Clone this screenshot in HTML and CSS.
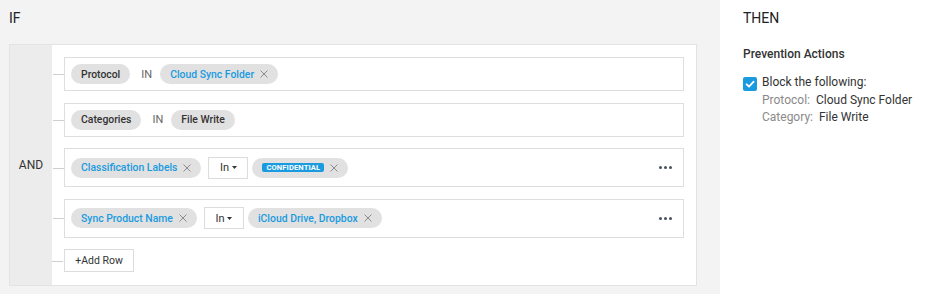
FILE: index.html
```html
<!DOCTYPE html>
<html lang="en">
<head>
<meta charset="utf-8">
<title>Policy rule</title>
<link rel="stylesheet" href="styles.css">
</head>
<body>
<div class="page">
  <section class="if-pane">
    <h2 class="pane-title">IF</h2>
    <div class="cond-box">
      <div class="op-col">AND</div>
      <div class="cond-list">
        <div class="cond-row short">
          <span class="chip">Protocol</span>
          <span class="op">IN</span>
          <span class="chip blue">Cloud Sync Folder<svg class="x" viewBox="0 0 8 8"><path d="M0.5 0.5L7.5 7.5M7.5 0.5L0.5 7.5"/></svg></span>
        </div>
        <div class="cond-row short">
          <span class="chip">Categories</span>
          <span class="op">IN</span>
          <span class="chip">File Write</span>
        </div>
        <div class="cond-row tall">
          <span class="chip blue">Classification Labels<svg class="x" viewBox="0 0 8 8"><path d="M0.5 0.5L7.5 7.5M7.5 0.5L0.5 7.5"/></svg></span>
          <span class="select">In<svg class="caret" viewBox="0 0 5 3"><path d="M0 0H5L2.5 3Z"/></svg></span>
          <span class="chip"><span class="badge">CONFIDENTIAL</span><svg class="x" viewBox="0 0 8 8"><path d="M0.5 0.5L7.5 7.5M7.5 0.5L0.5 7.5"/></svg></span>
          <span class="more"><i></i><i></i><i></i></span>
        </div>
        <div class="cond-row tall">
          <span class="chip blue">Sync Product Name<svg class="x" viewBox="0 0 8 8"><path d="M0.5 0.5L7.5 7.5M7.5 0.5L0.5 7.5"/></svg></span>
          <span class="select">In<svg class="caret" viewBox="0 0 5 3"><path d="M0 0H5L2.5 3Z"/></svg></span>
          <span class="chip blue">iCloud Drive, Dropbox<svg class="x" viewBox="0 0 8 8"><path d="M0.5 0.5L7.5 7.5M7.5 0.5L0.5 7.5"/></svg></span>
          <span class="more"><i></i><i></i><i></i></span>
        </div>
        <div class="add-wrap"><button class="add-row">+Add Row</button></div>
      </div>
    </div>
  </section>
  <aside class="then-pane">
    <h2 class="pane-title">THEN</h2>
    <h3 class="section-title">Prevention Actions</h3>
    <div class="action">
      <span class="checkbox"><svg viewBox="0 0 14 14"><path d="M3.6 7.3L6 9.6L10.6 4.6"/></svg></span>
      <div class="action-text">
        <div>Block the following:</div>
        <div><span class="k">Protocol:</span><span class="v">Cloud Sync Folder</span></div>
        <div><span class="k">Category:</span><span class="v">File Write</span></div>
      </div>
    </div>
  </aside>
</div>
</body>
</html>
```
FILE: styles.css
```css
* { box-sizing: border-box; }
html, body { margin: 0; padding: 0; }
body {
  font-family: Roboto, "Liberation Sans", sans-serif;
  color: #333;
  background: #fff;
}
.page {
  display: flex;
  width: 936px;
  height: 294px;
}
.if-pane {
  width: 720px;
  flex: none;
  background: #f3f3f3;
  padding: 0 23px 0 9px;
}
.pane-title {
  margin: 0 0 16px;
  padding-top: 8px;
  font-size: 14px;
  line-height: 20px;
  font-weight: 400;
  color: #222;
}
.cond-box {
  display: flex;
  border: 1px solid #e3e3e3;
  background: #fff;
  height: 242px;
}
.op-col {
  width: 42px;
  flex: none;
  background: #ececec;
  display: flex;
  align-items: center;
  justify-content: center;
  font-size: 12px;
  color: #333;
}
.cond-list {
  flex: 1;
  padding: 12px 12px 0 12px;
  display: flex;
  flex-direction: column;
  gap: 11.5px;
}
.cond-row {
  position: relative;
  display: flex;
  align-items: center;
  border: 1px solid #dedede;
  padding: 0 11px 0 6px;
  background: #fff;
}
.cond-row.short { height: 34px; }
.cond-row.tall { height: 39px; }
.cond-row::before,
.add-wrap::before {
  content: "";
  position: absolute;
  left: -12px;
  top: 50%;
  width: 11px;
  height: 1px;
  background: #cfcfcf;
}
.chip {
  display: inline-flex;
  align-items: center;
  gap: 6px;
  height: 20px;
  padding: 0 10px;
  border-radius: 10px;
  background: #e1e1e1;
  font-size: 10.4px;
  font-weight: 500;
  color: #333;
  white-space: nowrap;
}
.chip.blue { color: #1a9be0; }
.x {
  width: 8px;
  height: 8px;
  stroke: #8c8c8c;
  stroke-width: 1;
  fill: none;
}
.op {
  margin: 0 8px 0 11px;
  font-size: 11px;
  color: #666;
}
.select {
  display: inline-flex;
  align-items: center;
  justify-content: center;
  gap: 3px;
  width: 40px;
  height: 22px;
  margin: 0 4px 0 7px;
  border: 1px solid #dcdcdc;
  background: #fff;
  font-size: 11px;
  color: #333;
}
.caret {
  width: 5px;
  height: 3px;
  fill: #333;
}
.badge {
  display: inline-block;
  background: #1a9be0;
  color: #fff;
  font-size: 7.6px;
  font-weight: 700;
  line-height: 9px;
  padding: 0 4px;
  border-radius: 2px;
  letter-spacing: 0.1px;
}
.more {
  margin-left: auto;
  display: flex;
  gap: 2px;
}
.more i {
  display: block;
  width: 3px;
  height: 3px;
  border-radius: 50%;
  background: #45515c;
}
.add-wrap {
  position: relative;
  display: flex;
}
.add-row {
  height: 23px;
  width: 70px;
  padding: 0;
  border: 1px solid #dcdcdc;
  background: #fff;
  font-family: inherit;
  font-size: 10.5px;
  color: #333;
  cursor: pointer;
}
.then-pane {
  flex: 1;
  padding-left: 23px;
}
.section-title {
  margin: 0 0 12px;
  padding-top: 2px;
  font-size: 12px;
  line-height: 16px;
  font-weight: 500;
  color: #333;
}
.action {
  display: grid;
  grid-template-columns: 14px 1fr;
  column-gap: 5px;
  font-size: 12px;
  line-height: 17.6px;
  color: #333;
}
.checkbox {
  width: 14px;
  height: 14px;
  margin-top: 2.5px;
  border-radius: 2px;
  background: #1a9be0;
  display: block;
}
.checkbox svg {
  width: 14px;
  height: 14px;
  display: block;
  fill: none;
  stroke: #fff;
  stroke-width: 1.8;
  stroke-linecap: round;
  stroke-linejoin: round;
}
.k { color: #8a8a8a; }
.v { margin-left: 6px; color: #333; }
```
